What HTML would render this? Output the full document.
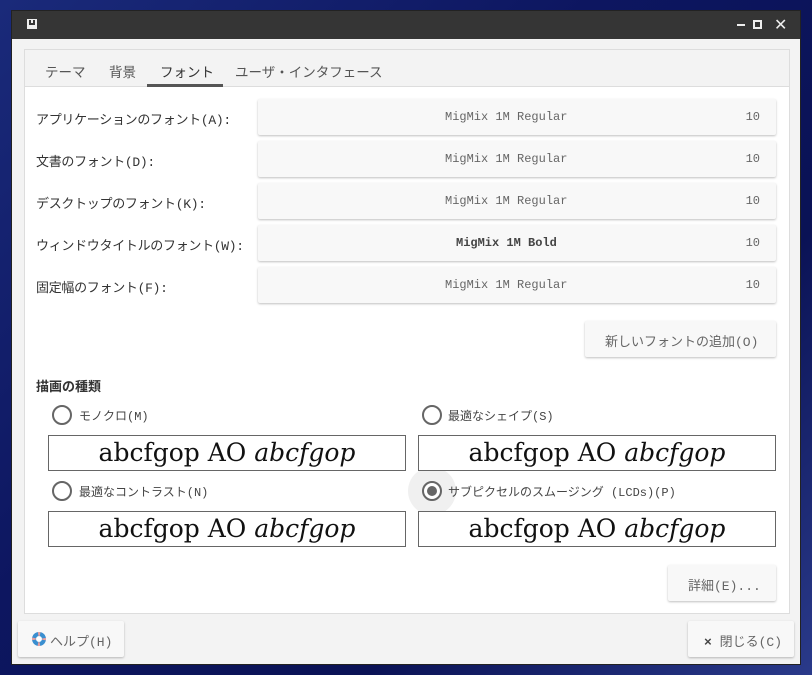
<!DOCTYPE html><html><head><meta charset="utf-8"><style>
*{box-sizing:border-box;margin:0;padding:0}
body{width:812px;height:675px;overflow:hidden;background:linear-gradient(135deg,#1a2a7a 0%,#0d1660 40%,#0a1255 70%,#2a3a8a 100%);font-family:"Liberation Mono","Noto Sans CJK JP",monospace;font-size:13px;color:#333;position:relative}
.win{position:absolute;left:11px;top:10px;width:790px;height:655px;background:#f3f3f3;border:1px solid #222}
.title{position:absolute;left:0;top:0;right:0;height:28px;background:#353535}
.panel{position:absolute;left:12px;top:38px;width:766px;height:565px;background:#fff;border:1px solid #ddd}
.tabs{position:absolute;left:0;top:0;right:0;height:37px;background:#f3f3f3;border-bottom:1px solid #ddd;font-family:"Liberation Sans","Noto Sans CJK JP",sans-serif}
.tab{position:absolute;top:11px;font-size:13.5px;color:#555}
.a{position:absolute}
.btn{position:absolute;background:#f8f8f8;border-radius:2px;box-shadow:0 1px 2px rgba(0,0,0,.25);font-family:"Liberation Mono","Noto Sans CJK JP",monospace;font-size:12px;color:#666}
.lbl{position:absolute;left:36px;font-size:13px;color:#333;letter-spacing:-0.3px}
.prev{position:absolute;border:1px solid #666;background:#fff;font-family:"DejaVu Serif","Liberation Serif",serif;font-size:25px;text-align:center;line-height:34px;color:#111}
.radio{position:absolute;width:20px;height:20px;border:2px solid #666;border-radius:50%;background:#fff}
.rl{position:absolute;font-size:12px;color:#444}
</style></head><body>
<div class="win">
<div class="title">
<div class="a" style="left:15px;top:8px;width:10px;height:10px;background:#eee"></div>
<div class="a" style="left:17px;top:9px;width:6px;height:5px;background:#353535"></div>
<div class="a" style="left:19px;top:9px;width:2px;height:3px;background:#eee"></div>
<div class="a" style="left:725px;top:13px;width:8px;height:2px;background:#eee"></div>
<div class="a" style="left:741px;top:9px;width:9px;height:9px;border:2px solid #eee"></div>
<div class="a" style="left:762px;top:4px;color:#eee;font-size:16px;font-weight:bold;font-family:'DejaVu Sans',sans-serif">✕</div>
</div>
<div class="panel">
<div class="tabs">
<span class="tab" style="left:20px">テーマ</span>
<span class="tab" style="left:84px">背景</span>
<span class="tab" style="left:135px;color:#333">フォント</span>
<span class="tab" style="left:210px">ユーザ・インタフェース</span>
<div class="a" style="left:122px;top:34px;width:76px;height:3px;background:#555"></div>
</div>
</div>
</div>
<div class="lbl" style="top:109px">アプリケーションのフォント(A):</div>
<div class="lbl" style="top:151px">文書のフォント(D):</div>
<div class="lbl" style="top:193px">デスクトップのフォント(K):</div>
<div class="lbl" style="top:235px">ウィンドウタイトルのフォント(W):</div>
<div class="lbl" style="top:277px">固定幅のフォント(F):</div>
<div class="btn" style="left:258px;top:99px;width:518px;height:36px"><span class="a" style="left:187px;top:11px">MigMix 1M Regular</span><span class="a" style="right:16px;top:11px">10</span></div>
<div class="btn" style="left:258px;top:141px;width:518px;height:36px"><span class="a" style="left:187px;top:11px">MigMix 1M Regular</span><span class="a" style="right:16px;top:11px">10</span></div>
<div class="btn" style="left:258px;top:183px;width:518px;height:36px"><span class="a" style="left:187px;top:11px">MigMix 1M Regular</span><span class="a" style="right:16px;top:11px">10</span></div>
<div class="btn" style="left:258px;top:225px;width:518px;height:36px"><span class="a" style="left:198px;top:11px;font-weight:bold;color:#444">MigMix 1M Bold</span><span class="a" style="right:16px;top:11px">10</span></div>
<div class="btn" style="left:258px;top:267px;width:518px;height:36px"><span class="a" style="left:187px;top:11px">MigMix 1M Regular</span><span class="a" style="right:16px;top:11px">10</span></div>
<div class="btn" style="left:585px;top:321px;width:191px;height:36px;font-size:13px"><span class="a" style="left:20px;top:10px">新しいフォントの追加(O)</span></div>
<div class="a" style="left:36px;top:376px;font-weight:bold;font-size:13px;font-family:'Liberation Sans','Noto Sans CJK JP',sans-serif">描画の種類</div>
<div class="radio" style="left:52px;top:405px"></div><span class="rl" style="left:79px;top:407px">モノクロ(M)</span>
<div class="radio" style="left:422px;top:405px"></div><span class="rl" style="left:448px;top:407px">最適なシェイプ(S)</span>
<div class="radio" style="left:52px;top:481px"></div><span class="rl" style="left:79px;top:483px">最適なコントラスト(N)</span>
<div class="a" style="left:408px;top:467px;width:48px;height:48px;border-radius:50%;background:#f0f0f0"></div>
<div class="radio" style="left:422px;top:481px"></div><div class="a" style="left:427px;top:486px;width:10px;height:10px;border-radius:50%;background:#666"></div><span class="rl" style="left:448px;top:483px">サブピクセルのスムージング (LCDs)(P)</span>
<div class="prev" style="left:48px;top:435px;width:358px;height:36px">abcfgop AO <i>abcfgop</i></div>
<div class="prev" style="left:418px;top:435px;width:358px;height:36px">abcfgop AO <i>abcfgop</i></div>
<div class="prev" style="left:48px;top:511px;width:358px;height:36px">abcfgop AO <i>abcfgop</i></div>
<div class="prev" style="left:418px;top:511px;width:358px;height:36px">abcfgop AO <i>abcfgop</i></div>
<div class="btn" style="left:668px;top:565px;width:108px;height:36px;font-size:13px"><span class="a" style="left:20px;top:10px">詳細(E)...</span></div>
<div class="btn" style="left:18px;top:621px;width:106px;height:36px;font-size:13px">
<svg class="a" style="left:14px;top:11px" width="14" height="14" viewBox="0 0 14 14"><circle cx="7" cy="7" r="5" fill="none" stroke="#3a8fd0" stroke-width="4"/><circle cx="7" cy="7" r="5" fill="none" stroke="#e8a0a0" stroke-width="4" stroke-dasharray="2 5.85" stroke-dashoffset="1"/><circle cx="7" cy="7" r="2.5" fill="#fff"/></svg>
<span class="a" style="left:32px;top:10px">ヘルプ(H)</span></div>
<div class="btn" style="left:688px;top:621px;width:106px;height:36px;font-size:13px"><span class="a" style="left:16px;top:10px"><b style="color:#444">×</b> 閉じる(C)</span></div>
</body></html>
